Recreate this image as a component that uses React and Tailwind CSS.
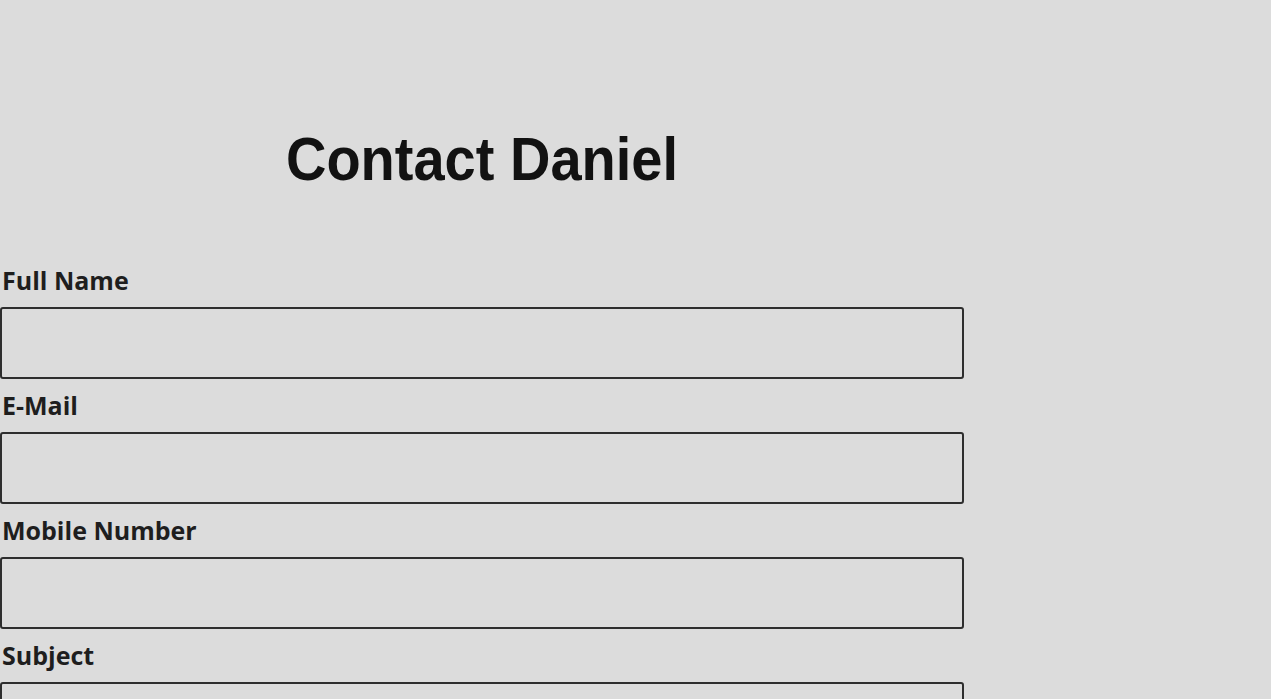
import { useState } from 'react';

const fields = [
  { name: 'fullName', label: 'Full Name', type: 'text' },
  { name: 'email', label: 'E-Mail', type: 'email' },
  { name: 'mobile', label: 'Mobile Number', type: 'tel' },
  { name: 'subject', label: 'Subject', type: 'text' },
];

export default function App() {
  const [form, setForm] = useState({ fullName: '', email: '', mobile: '', subject: '', message: '' });

  const update = (e) => setForm({ ...form, [e.target.name]: e.target.value });

  return (
    <div className="min-h-screen bg-[#dcdcdc] pt-[128px]">
      <div className="w-[964px]">
        <h1 className="scale-y-[1.1] text-center font-['Liberation_Sans',Arial,sans-serif] text-[56px] leading-[62px] font-bold text-[#121212]">
          Contact Daniel
        </h1>
        <form className="mt-[74px] flex flex-col font-['Open_Sans','Noto_Sans',sans-serif]">
          {fields.map((f, i) => (
            <div key={f.name} className={i === 0 ? '' : 'mt-[10px]'}>
              <label htmlFor={f.name} className="block pl-[2px] text-[25px] leading-[32px] font-bold text-[#1e1e1e]">
                {f.label}
              </label>
              <input
                id={f.name}
                name={f.name}
                type={f.type}
                value={form[f.name]}
                onChange={update}
                className="mt-[11px] block h-[72px] w-full rounded-[3px] border-2 border-[#2e2e2e] bg-transparent px-3 text-[20px] outline-none"
              />
            </div>
          ))}
          <div className="mt-[10px]">
            <label htmlFor="message" className="block pl-[2px] text-[25px] leading-[32px] font-bold text-[#1e1e1e]">
              Message
            </label>
            <textarea
              id="message"
              name="message"
              value={form.message}
              onChange={update}
              className="mt-[11px] block h-[160px] w-full rounded-[3px] border-2 border-[#2e2e2e] bg-transparent p-3 text-[20px] outline-none"
            />
          </div>
        </form>
      </div>
    </div>
  );
}
